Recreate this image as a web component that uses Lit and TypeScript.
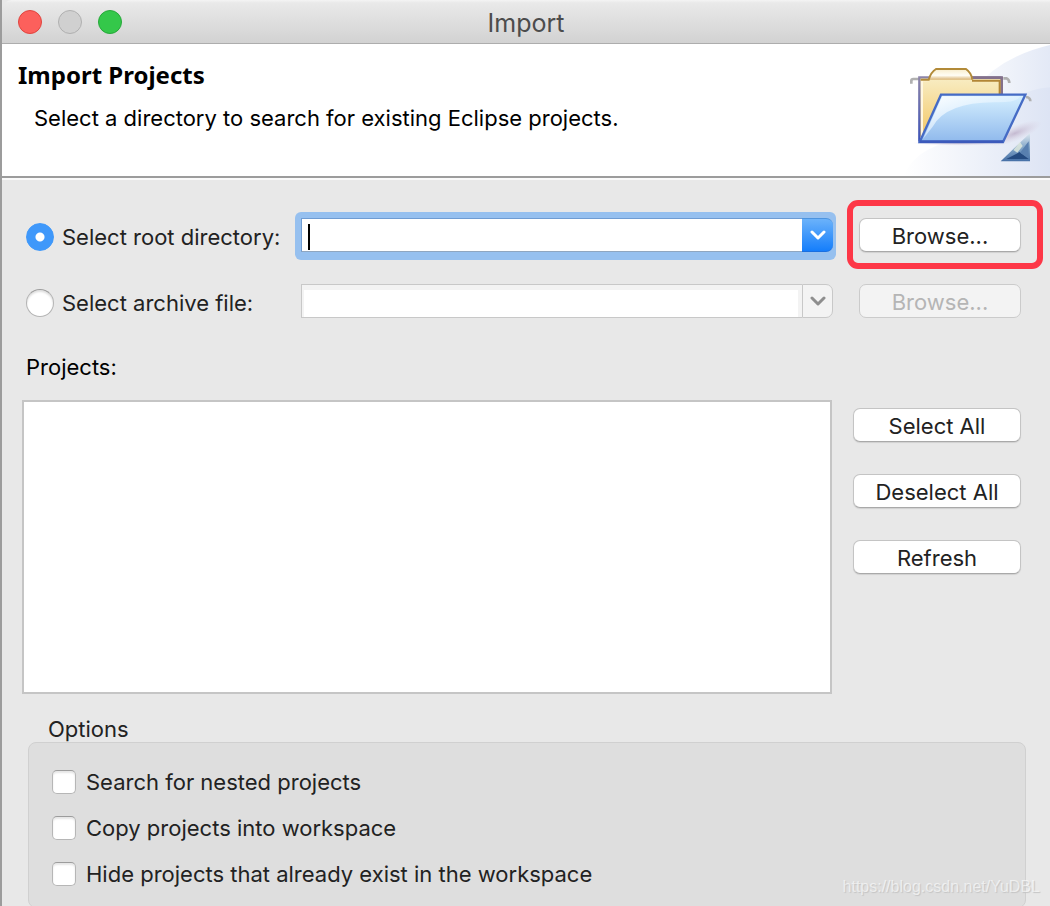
import { LitElement, html, css, svg } from "lit";
import { customElement, property, state } from "lit/decorators.js";

const chevron = svg`<path d="M2 3 L8 9 L14 3" fill="none" stroke="currentColor" stroke-width="3" stroke-linecap="round" stroke-linejoin="round"/>`;

@customElement("combo-box")
class ComboBox extends LitElement {
  @property() label = "";
  @property({ type: Boolean, reflect: true }) active = false;

  static styles = css`
    :host {
      display: block;
      position: relative;
    }
    .combo {
      position: relative;
      display: flex;
      height: 34px;
      box-sizing: border-box;
    }
    .ring {
      position: absolute;
      inset: -6px -3px -8px -6px;
      border-radius: 6px;
      background: #96c0ef;
    }
    .field {
      flex: 1;
      min-width: 0;
      box-sizing: border-box;
      margin: 0;
      padding: 0 8px;
      border: 1px solid #c8c8c8;
      border-right: 0;
      border-radius: 0;
      background: #fff;
      box-shadow: inset 0 5px 0 #f3f3f3, inset 2px 0 0 #f3f3f3, inset -4px 0 0 #f3f3f3;
      font: 22px Inter, sans-serif;
      outline: none;
    }
    .toggle {
      flex: none;
      width: 31px;
      margin: 0;
      padding: 0 0 0 1px;
      border: 1px solid #c8c8c8;
      border-radius: 0 7px 7px 0;
      background: #f3f3f3;
      color: #8e8e8e;
      display: flex;
      align-items: center;
      justify-content: center;
    }
    .active .field {
      border: 1px solid #6f9cd3;
      border-right: 0;
      border-bottom-color: #8fa6c0;
      box-shadow: none;
    }
    .active .toggle {
      border: 0;
      border-top: 1px solid #4c94e0;
      border-bottom: 1px solid #1a6fe0;
      background: linear-gradient(#6bb2fa, #157efb);
      color: #fff;
    }
    .caret {
      position: absolute;
      left: 7px;
      top: 6px;
      width: 2px;
      height: 26px;
      background: #000;
    }
  `;

  render() {
    return html`
      ${this.active ? html`<div class="ring"></div>` : ""}
      <div class="combo ${this.active ? "active" : ""}">
        <input class="field" type="text" aria-label=${this.label} ?disabled=${!this.active} />
        <button class="toggle" type="button" aria-label="Show history" ?disabled=${!this.active}>
          <svg width="16" height="12" viewBox="0 0 16 12">${chevron}</svg>
        </button>
        ${this.active ? html`<span class="caret"></span>` : ""}
      </div>
    `;
  }
}

@customElement("app-root")
class AppRoot extends LitElement {
  @state() private source = "root";

  private options = [
    "Search for nested projects",
    "Copy projects into workspace",
    "Hide projects that already exist in the workspace",
  ];

  static styles = css`
    :host {
      display: block;
      position: relative;
      height: 100vh;
      overflow: hidden;
      background: #e8e8e8;
      color: #222;
      font: 22px/26px Inter, sans-serif;
    }
    .window {
      min-height: 100%;
      border-left: 2px solid #9c9c9c;
      box-sizing: border-box;
    }
    .titlebar {
      display: grid;
      grid-template-columns: 1fr auto 1fr;
      align-items: center;
      height: 44px;
      box-sizing: border-box;
      border-bottom: 1px solid #adadad;
      border-top-left-radius: 10px;
      background: linear-gradient(#f4f4f4, #e9e9e9 3px, #d2d2d2);
    }
    .lights {
      display: flex;
      gap: 16px;
      padding-left: 16px;
    }
    .light {
      width: 24px;
      height: 24px;
      padding: 0;
      box-sizing: border-box;
      border: 1px solid #e0443e;
      border-radius: 50%;
      background: #fc605c;
    }
    .light.minimise {
      border-color: #b0b0b0;
      background: #d0d0d0;
    }
    .light.zoom {
      border-color: #27a83a;
      background: #34c84a;
    }
    .title {
      margin: 0;
      padding-top: 2px;
      font-size: 25px;
      font-weight: 400;
      line-height: 32px;
      color: #4c4c4c;
    }
    .banner {
      display: flex;
      justify-content: space-between;
      height: 132px;
      background: #fff;
      border-bottom: 2px solid #9c9c9c;
      color: #000;
    }
    .heading {
      margin: 0;
      padding: 15px 0 0 16px;
      font: 700 24px/32px "Noto Sans", sans-serif;
    }
    .message {
      margin: 0;
      padding: 14px 0 0 32px;
    }
    .art {
      flex: none;
    }
    .body {
      border-top: 2px solid #fafafa;
      padding: 38px 24px 0 20px;
    }
    .sources {
      display: grid;
      grid-template-columns: 275px 1fr 162px;
      row-gap: 32px;
      padding: 0 5px 0 4px;
    }
    .source {
      display: flex;
      align-items: center;
      gap: 8px;
      padding-top: 4px;
      height: 30px;
      white-space: nowrap;
    }
    .radio {
      appearance: none;
      flex: none;
      width: 28px;
      height: 28px;
      margin: 0;
      border: 1px solid #b4b4b4;
      border-top-color: #9c9c9c;
      border-radius: 50%;
      background: #fff;
      box-shadow: inset 0 2px 2px #e0e0e0;
    }
    .radio:checked {
      border-color: #3f98fa;
      background: radial-gradient(circle, #fff 4px, #3f98fa 5px);
      box-shadow: none;
    }
    .action {
      position: relative;
    }
    .btn {
      display: block;
      width: 100%;
      height: 34px;
      padding: 2px 0 0;
      border: 1px solid #c4c4c4;
      border-bottom-color: #a9a9a9;
      border-radius: 7px;
      background: #fff;
      box-shadow: 0 1px 1px #d0d0d0;
      font: inherit;
      color: #222;
    }
    .btn:disabled {
      border-color: #cbcbcb;
      background: #f3f3f3;
      box-shadow: none;
      color: #b5b5b5;
    }
    .marker {
      position: absolute;
      inset: -18px -22px -17px -12px;
      border: 6px solid #fd3747;
      border-radius: 11px;
      pointer-events: none;
    }
    .combo {
      margin-right: 26px;
    }
    .projects-label {
      margin: 0;
      padding: 36px 0 20px 4px;
      font: inherit;
      color: #000;
    }
    .projects {
      display: grid;
      grid-template-columns: 1fr 168px;
      gap: 21px;
      padding-right: 5px;
    }
    .list {
      height: 290px;
      border: 2px solid #c5c5c5;
      background: #fff;
    }
    .side {
      display: flex;
      flex-direction: column;
      gap: 32px;
      padding-top: 8px;
    }
    .options {
      margin: 0;
      padding: 0;
      border: 0;
    }
    .legend {
      padding: 22px 0 0 26px;
    }
    .group {
      display: flex;
      flex-direction: column;
      gap: 20px;
      margin-left: 6px;
      padding: 26px 23px 20px;
      border: 1px solid #d0d0d0;
      border-radius: 8px;
      background: #dedede;
    }
    .option {
      display: flex;
      align-items: center;
      gap: 10px;
    }
    .check {
      appearance: none;
      flex: none;
      width: 24px;
      height: 24px;
      margin: 1px 0;
      border: 1px solid #b6b6b6;
      border-top-color: #9c9c9c;
      border-radius: 5px;
      background: #fff;
      box-shadow: inset 0 2px 2px #e6e6e6;
    }
    .watermark {
      position: absolute;
      right: 10px;
      bottom: 9px;
      font: 16px/20px "Liberation Sans", sans-serif;
      color: rgba(255, 255, 255, 0.6);
      text-shadow: 1px 1px 1px #c4c4c4;
    }
  `;

  private art() {
    return html`
      <svg class="art" width="160" height="132" viewBox="0 12 480 396" aria-hidden="true">
        <defs>
          <linearGradient id="sky" x1="0" x2="1"><stop offset="0" stop-color="#fff" /><stop offset="1" stop-color="#dde4f4" /></linearGradient>
          <linearGradient id="halo" x1="0" x2="1"><stop offset="0" stop-color="#fff" /><stop offset="1" stop-color="#e3e9f6" /></linearGradient>
          <linearGradient id="paper" x1="0" y1="0" x2="0" y2="1"><stop offset="0" stop-color="#f8edc4" /><stop offset="1" stop-color="#f2c765" /></linearGradient>
          <linearGradient id="tab" x1="0" y1="0" x2="0" y2="1"><stop offset="0" stop-color="#f8eccb" /><stop offset=".6" stop-color="#fffdf4" /><stop offset="1" stop-color="#d9b476" /></linearGradient>
          <linearGradient id="front" x1="0" y1="0" x2="0" y2="1"><stop offset="0" stop-color="#d6f0ff" /><stop offset="1" stop-color="#8fb9ec" /></linearGradient>
          <linearGradient id="gloss" x1="0" y1="0" x2="1" y2="1"><stop offset="0" stop-color="#fff" /><stop offset="1" stop-color="#d0eaff" stop-opacity=".2" /></linearGradient>
          <linearGradient id="edge" x1="0" y1="0" x2="0" y2="1"><stop offset="0" stop-color="#8c84a8" /><stop offset="1" stop-color="#3c52b8" /></linearGradient>
          <linearGradient id="wedge" x1="0" y1="0" x2="0" y2="1"><stop offset="0" stop-color="#dfe9f0" /><stop offset=".5" stop-color="#86a8c9" /><stop offset="1" stop-color="#456fa6" /></linearGradient>
          <radialGradient id="shade"><stop offset="0" stop-color="#b9a9c4" stop-opacity=".75" /><stop offset="1" stop-color="#d7cbdc" stop-opacity="0" /></radialGradient>
        </defs>
        <path d="M250 150 Q330 50 480 15 V408 H190 Z" fill="url(#halo)" />
        <path d="M40 408 Q80 310 250 290 Q350 150 480 142 V408 Z" fill="url(#sky)" />
        <ellipse cx="375" cy="280" rx="85" ry="24" fill="url(#shade)" transform="rotate(-22 375 280)" />
        <ellipse cx="210" cy="309" rx="145" ry="8" fill="url(#shade)" />
        <path d="M64 131 V122 Q64 117 70 117 H88 M340 115 H350 Q358 119 358 129 M128 184 V178 Q129 174 145 174 M408 171 Q421 172 421 184" fill="none" stroke="#b0b0b0" stroke-width="8" />
        <path d="M88 112 H334 V290 H88 Z" fill="url(#paper)" />
        <path d="M88 305 V112 H335" fill="none" stroke="url(#edge)" stroke-width="7" />
        <path d="M245 113 H335 V170" fill="none" stroke="#84718b" stroke-width="8" />
        <path d="M246 122 H329 V162" fill="none" stroke="#b28636" stroke-width="6" />
        <path d="M96 292 V121 H116" fill="none" stroke="#fff7df" stroke-width="6" />
        <path d="M92 119 H116 Q123 96 138 87 H228 Q244 98 247 119 Z" fill="url(#tab)" />
        <path d="M92 119 H116 Q123 96 138 87 H228 Q244 98 247 119" fill="none" stroke="#b28a38" stroke-width="6" />
        <path d="M153 164 H406 L339 306 H89 Z" fill="url(#front)" />
        <path d="M157 169 H390 Q382 188 320 187 Q170 185 128 260 L99 297 Z" fill="url(#gloss)" />
        <path d="M153 164 H406 L339 306 H89 Z" fill="none" stroke="#456bc5" stroke-width="7" />
        <path d="M89 305 H339" stroke="#3c5abb" stroke-width="8" />
        <path d="M332 364 L420 279 V364 Z" fill="url(#wedge)" />
        <path d="M349 357 L389 336 L416 357 Z" fill="#244a80" />
        <path d="M390 338 L416 304 V355 Z" fill="#587faf" />
        <path d="M370 330 L390 306 L398 318 L382 338 Z" fill="#e4ecdf" opacity=".8" />
      </svg>
    `;
  }

  private sourceRow(id: string, text: string) {
    const on = this.source === id;
    return html`
      <label class="source">
        <input class="radio" type="radio" name="source" .checked=${on} @change=${() => (this.source = id)} />
        <span>${text}</span>
      </label>
      <combo-box class="combo" .label=${text} .active=${on}></combo-box>
      <div class="action">
        <button class="btn" type="button" ?disabled=${!on}>Browse...</button>
        ${id === "root" ? html`<span class="marker"></span>` : ""}
      </div>
    `;
  }

  render() {
    return html`
      <div class="window">
        <header class="titlebar">
          <div class="lights">
            <button class="light" aria-label="Close"></button>
            <button class="light minimise" aria-label="Minimise" disabled></button>
            <button class="light zoom" aria-label="Zoom"></button>
          </div>
          <h1 class="title">Import</h1>
        </header>
        <section class="banner">
          <div>
            <h2 class="heading">Import Projects</h2>
            <p class="message">Select a directory to search for existing Eclipse projects.</p>
          </div>
          ${this.art()}
        </section>
        <main class="body">
          <div class="sources">
            ${this.sourceRow("root", "Select root directory:")}
            ${this.sourceRow("archive", "Select archive file:")}
          </div>
          <h3 class="projects-label" id="projects">Projects:</h3>
          <div class="projects">
            <div class="list" role="listbox" aria-labelledby="projects"></div>
            <div class="side">
              <button class="btn" type="button">Select All</button>
              <button class="btn" type="button">Deselect All</button>
              <button class="btn" type="button">Refresh</button>
            </div>
          </div>
          <fieldset class="options">
            <legend class="legend">Options</legend>
            <div class="group">
              ${this.options.map(
                (text) => html`<label class="option"><input class="check" type="checkbox" /><span>${text}</span></label>`
              )}
            </div>
          </fieldset>
        </main>
      </div>
      <div class="watermark">https://blog.csdn.net/YuDBL</div>
    `;
  }
}
